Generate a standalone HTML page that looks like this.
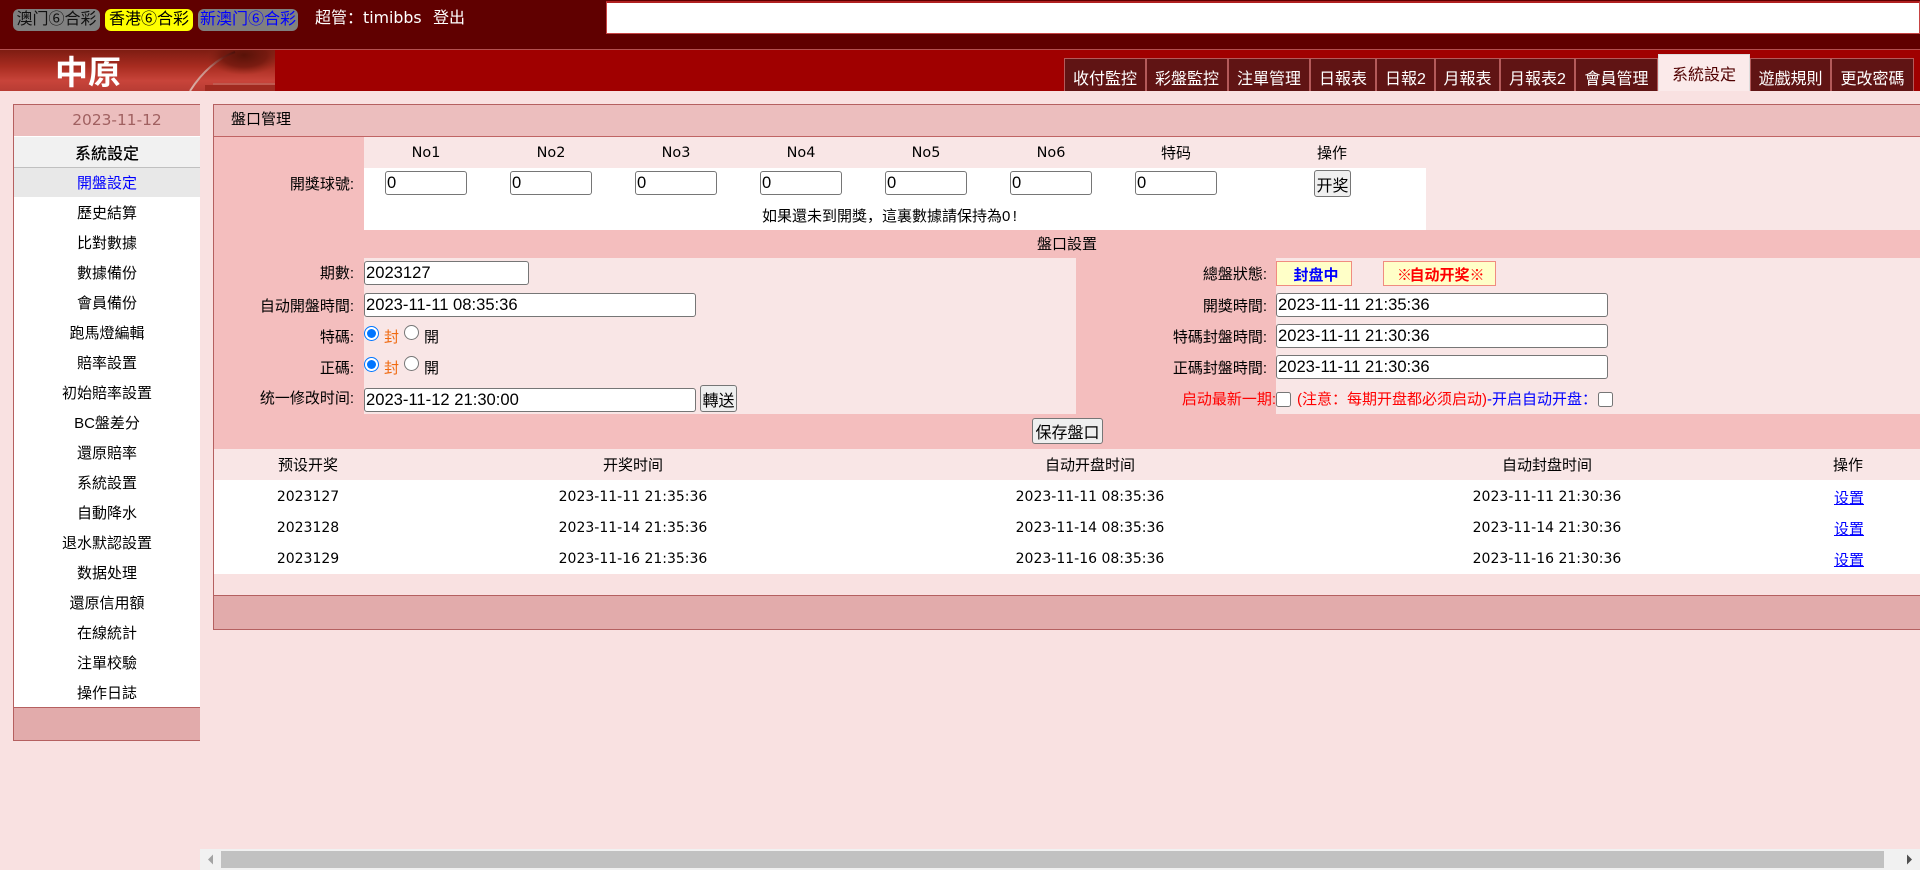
<!DOCTYPE html>
<html lang="zh"><head><meta charset="utf-8"><title>盤口管理</title>
<style>
html,body{margin:0;padding:0;width:1920px;height:870px;overflow:hidden;background:#f9e1e1}
body{position:relative;font-family:"Liberation Sans","Noto Sans CJK TC",sans-serif;font-size:15px;color:#000}
.b,.t,.c,.r,input,button,a{position:absolute}
.b{display:block}
.t,.c,.r{white-space:nowrap;height:20px;line-height:22px}
.c{width:300px;text-align:center}
.r{text-align:right}
.d{font-family:"DejaVu Sans","Noto Sans CJK TC",sans-serif;font-size:14px;line-height:20px}
.tab{position:absolute;top:58px;height:33px;box-sizing:border-box;background:#601414;border:1px solid #b55a5a;border-bottom:0;color:#fff;font-size:16px;line-height:42px;text-align:center;white-space:nowrap}
.pill{position:absolute;top:9px;height:22px;line-height:22px;border-radius:6px;font-size:16px;text-align:center;white-space:nowrap}
.m{position:absolute;left:14px;width:186px;height:30px;line-height:32px;text-align:center;font-size:15px;white-space:nowrap;color:#000}
input[type=text]{box-sizing:border-box;height:24px;margin:0;padding:1px 1px;border:1px solid #767676;border-radius:3px;background:#fff;color:#000;font:16.6px "Liberation Sans",sans-serif}
input[type=radio],input[type=checkbox]{margin:0;width:15px;height:15px}
button{box-sizing:border-box;margin:0;padding:0;border:1px solid #767676;border-radius:3px;background:#efefef;color:#000;font:16px "Liberation Sans","Noto Sans CJK TC",sans-serif;white-space:nowrap}
.st{position:absolute;top:261px;height:25px;box-sizing:border-box;background:#ffffc8;border:1px solid #f08c80;font-weight:bold;font-size:15px;line-height:28px;text-align:center;white-space:nowrap}
.x{display:inline-block;width:12.5px;text-align:center}
a{color:#00f;text-decoration:underline;text-underline-offset:1px}
</style></head><body>

<!-- top bar -->
<div class="b" style="left:0;top:0;width:1920px;height:49px;background:#600000"></div>
<div class="b" style="left:0;top:49px;width:1920px;height:1px;background:#b45050"></div>
<div class="pill" style="left:13px;width:87px;background:#808080;color:#111">澳门⑥合彩</div>
<div class="pill" style="left:105px;width:88px;background:#ff0;color:#000">香港⑥合彩</div>
<div class="pill" style="left:198px;width:100px;background:#808080;color:#00f">新澳门⑥合彩</div>
<div class="t" style="left:315px;top:7px;color:#fff;font-size:16px;font-family:'DejaVu Sans','Noto Sans CJK TC',sans-serif"><span style="font-size:16px">超管：</span><span style="font-size:15.8px">timibbs</span></div>
<div class="t" style="left:433px;top:8px;color:#fff;font-size:16px">登出</div>
<div class="b" style="left:606px;top:1px;width:1314px;height:33px;box-sizing:border-box;background:#fff;border:1px solid #c84444;border-top:2px solid #b02020"></div>

<!-- header -->
<div class="b" style="left:0;top:50px;width:1920px;height:41px;background:#a00000"></div>
<svg class="b" style="left:0;top:50px" width="275" height="41" viewBox="0 0 275 41">
<defs>
<linearGradient id="g" x1="0" y1="0" x2="0" y2="1"><stop offset="0" stop-color="#7e1c12"/><stop offset=".4" stop-color="#a82c20"/><stop offset=".75" stop-color="#c8443a"/><stop offset="1" stop-color="#b83c34"/></linearGradient>
<radialGradient id="h"><stop offset="0" stop-color="#581208"/><stop offset=".6" stop-color="#70180e" stop-opacity=".8"/><stop offset="1" stop-color="#8a2818" stop-opacity="0"/></radialGradient>
<linearGradient id="s" x1="0" y1="1" x2="1" y2="0"><stop offset="0" stop-color="#dcb4ac"/><stop offset=".45" stop-color="#c89088"/><stop offset=".8" stop-color="#6a2018"/><stop offset="1" stop-color="#4e100a"/></linearGradient>
</defs>
<rect width="275" height="41" fill="url(#g)"/>
<ellipse cx="244" cy="5" rx="38" ry="20" fill="url(#h)"/>
<path d="M190 41C202 22 218 8 235 2" fill="none" stroke="url(#s)" stroke-width="2"/>
<rect x="213" y="33" width="62" height="2" fill="#c05a50"/>
<rect x="205" y="35" width="70" height="6" fill="#a02a20"/>
</svg>
<div class="t" style="left:55px;top:53px;height:40px;line-height:40px;color:#fff;font-size:33px;font-weight:bold">中原</div>

<div class="tab" style="left:1064px;width:82px">收付監控</div>
<div class="tab" style="left:1146px;width:82px">彩盤監控</div>
<div class="tab" style="left:1228px;width:82px">注單管理</div>
<div class="tab" style="left:1310px;width:66px">日報表</div>
<div class="tab" style="left:1376px;width:59px">日報2</div>
<div class="tab" style="left:1435px;width:65px">月報表</div>
<div class="tab" style="left:1500px;width:75px">月報表2</div>
<div class="tab" style="left:1575px;width:83px">會員管理</div>
<div class="tab" style="left:1658px;top:54px;height:37px;width:92px;background:#fbeaea;color:#500000;border-color:#ddd;line-height:42px">系統設定</div>
<div class="tab" style="left:1750px;width:81px">遊戲規則</div>
<div class="tab" style="left:1831px;width:83px">更改密碼</div>

<!-- sidebar -->
<div class="b" style="left:13px;top:104px;width:187px;height:637px;box-sizing:border-box;background:#fff;border:1px solid #b56060;border-right:0"></div>
<div class="b" style="left:14px;top:105px;width:186px;height:31px;background:#ecbebe"></div>
<div class="m d" style="left:24px;top:105px;height:31px;line-height:31px;font-size:15.4px;color:#a06060">2023-11-12</div>
<div class="b" style="left:14px;top:137px;width:186px;height:30px;background:#f1f1f1;border-bottom:1px solid #c0c0c0"></div>
<div class="m" style="top:138px;font-size:16px;font-weight:500;line-height:33px">系統設定</div>
<div class="b" style="left:14px;top:168px;width:186px;height:29px;background:#e8e8e8"></div>
<div class="m" style="top:168px;color:#00f">開盤設定</div>
<div class="m" style="top:198px">歷史結算</div>
<div class="m" style="top:228px">比對數據</div>
<div class="m" style="top:258px">數據備份</div>
<div class="m" style="top:288px">會員備份</div>
<div class="m" style="top:318px">跑馬燈編輯</div>
<div class="m" style="top:348px">賠率設置</div>
<div class="m" style="top:378px">初始賠率設置</div>
<div class="m" style="top:408px">BC盤差分</div>
<div class="m" style="top:438px">還原賠率</div>
<div class="m" style="top:468px">系統設置</div>
<div class="m" style="top:498px">自動降水</div>
<div class="m" style="top:528px">退水默認設置</div>
<div class="m" style="top:558px">数据处理</div>
<div class="m" style="top:588px">還原信用額</div>
<div class="m" style="top:618px">在線統計</div>
<div class="m" style="top:648px">注單校驗</div>
<div class="m" style="top:678px">操作日誌</div>
<div class="b" style="left:14px;top:707px;width:186px;height:33px;background:#e2abab;border-top:1px solid #b56060;box-sizing:border-box"></div>

<!-- main panel -->
<div class="b" style="left:213px;top:104px;width:1707px;height:526px;box-sizing:border-box;border:1px solid #b56060;border-right:0;background:#f9e1e1"></div>
<div class="b" style="left:214px;top:105px;width:1706px;height:31px;background:#ecbebe"></div>
<div class="b" style="left:214px;top:136px;width:1706px;height:1px;background:#c06464"></div>
<div class="t" style="left:231px;top:110px;line-height:20px">盤口管理</div>

<!-- pink base -->
<div class="b" style="left:214px;top:137px;width:1706px;height:312px;background:#f4bebe"></div>
<div class="b" style="left:364px;top:137px;width:1556px;height:93px;background:#f9e6e6"></div>
<div class="b" style="left:364px;top:168px;width:1062px;height:62px;background:#fff"></div>
<div class="b" style="left:364px;top:258px;width:712px;height:156px;background:#f9e6e6"></div>
<div class="b" style="left:1276px;top:258px;width:644px;height:156px;background:#f9e6e6"></div>

<div class="c d" style="left:276px;top:143px;font-size:14.4px">No1</div>
<div class="c d" style="left:401px;top:143px;font-size:14.4px">No2</div>
<div class="c d" style="left:526px;top:143px;font-size:14.4px">No3</div>
<div class="c d" style="left:651px;top:143px;font-size:14.4px">No4</div>
<div class="c d" style="left:776px;top:143px;font-size:14.4px">No5</div>
<div class="c d" style="left:901px;top:143px;font-size:14.4px">No6</div>
<div class="c" style="left:1026px;top:143px">特码</div>
<div class="c" style="left:1182px;top:143px">操作</div>

<div class="r" style="left:214px;width:140px;top:174px">開獎球號:</div>
<input type="text" value="0" style="left:385px;top:171px;width:82px">
<input type="text" value="0" style="left:510px;top:171px;width:82px">
<input type="text" value="0" style="left:635px;top:171px;width:82px">
<input type="text" value="0" style="left:760px;top:171px;width:82px">
<input type="text" value="0" style="left:885px;top:171px;width:82px">
<input type="text" value="0" style="left:1010px;top:171px;width:82px">
<input type="text" value="0" style="left:1135px;top:171px;width:82px">
<button style="left:1314px;top:170px;width:37px;height:27px">开奖</button>
<div class="t" style="left:762px;top:206px">如果還未到開獎，這裏數據請保持為<span style="letter-spacing:2.4px">0!</span></div>

<div class="c" style="left:917px;top:234px">盤口設置</div>

<!-- left form -->
<div class="r" style="left:214px;width:140px;top:263px">期數:</div>
<input type="text" value="2023127" style="left:364px;top:261px;width:165px">
<div class="r" style="left:214px;width:140px;top:296px">自动開盤時間:</div>
<input type="text" value="2023-11-11 08:35:36" style="left:364px;top:293px;width:332px">
<div class="r" style="left:214px;width:140px;top:327px">特碼:</div>
<input type="radio" name="a" checked style="left:364px;top:326px">
<div class="t" style="left:384px;top:327px;color:#f06a10">封</div>
<input type="radio" name="a" style="left:404px;top:325px">
<div class="t" style="left:424px;top:327px">開</div>
<div class="r" style="left:214px;width:140px;top:358px">正碼:</div>
<input type="radio" name="b" checked style="left:364px;top:357px">
<div class="t" style="left:384px;top:358px;color:#f06a10">封</div>
<input type="radio" name="b" style="left:404px;top:356px">
<div class="t" style="left:424px;top:358px">開</div>
<div class="r" style="left:214px;width:140px;top:388px">统一修改时间:</div>
<input type="text" value="2023-11-12 21:30:00" style="left:364px;top:388px;width:332px">
<button style="left:700px;top:385px;width:37px;height:27px">轉送</button>

<!-- right form -->
<div class="r" style="left:1076px;width:191px;top:264px">總盤狀態:</div>
<div class="st" style="left:1276px;width:76px;color:#00f;padding-left:4px">封盘中</div>
<div class="st" style="left:1383px;width:113px;color:#f00"><span class="x">※</span>自动开奖<span class="x">※</span></div>
<div class="r" style="left:1076px;width:191px;top:296px">開獎時間:</div>
<input type="text" value="2023-11-11 21:35:36" style="left:1276px;top:293px;width:332px">
<div class="r" style="left:1076px;width:191px;top:327px">特碼封盤時間:</div>
<input type="text" value="2023-11-11 21:30:36" style="left:1276px;top:324px;width:332px">
<div class="r" style="left:1076px;width:191px;top:358px">正碼封盤時間:</div>
<input type="text" value="2023-11-11 21:30:36" style="left:1276px;top:355px;width:332px">
<div class="r" style="left:1076px;width:200px;top:389px;color:#f00">启动最新一期:</div>
<input type="checkbox" style="left:1276px;top:392px">
<div class="t" style="left:1297px;top:389px;color:#f00">(注意：每期开盘都必须启动)<span style="color:#00f">-开启自动开盘：</span></div>
<input type="checkbox" style="left:1598px;top:392px">

<button style="left:1032px;top:418px;width:71px;height:26px">保存盤口</button>

<!-- table -->
<div class="b" style="left:214px;top:449px;width:1706px;height:31px;background:#f9e6e6"></div>
<div class="b" style="left:214px;top:480px;width:1706px;height:94px;background:#fff"></div>
<div class="c" style="left:158px;top:455px">预设开奖</div>
<div class="c" style="left:483px;top:455px">开奖时间</div>
<div class="c" style="left:940px;top:455px">自动开盘时间</div>
<div class="c" style="left:1397px;top:455px">自动封盘时间</div>
<div class="c" style="left:1698px;top:455px">操作</div>

<div class="c d" style="left:158px;top:487px">2023127</div>
<div class="c d" style="left:483px;top:487px">2023-11-11 21:35:36</div>
<div class="c d" style="left:940px;top:487px">2023-11-11 08:35:36</div>
<div class="c d" style="left:1397px;top:487px">2023-11-11 21:30:36</div>
<a class="c" href="#" style="left:1699px;top:488px"><span>设置</span></a>

<div class="c d" style="left:158px;top:518px">2023128</div>
<div class="c d" style="left:483px;top:518px">2023-11-14 21:35:36</div>
<div class="c d" style="left:940px;top:518px">2023-11-14 08:35:36</div>
<div class="c d" style="left:1397px;top:518px">2023-11-14 21:30:36</div>
<a class="c" href="#" style="left:1699px;top:519px"><span>设置</span></a>

<div class="c d" style="left:158px;top:549px">2023129</div>
<div class="c d" style="left:483px;top:549px">2023-11-16 21:35:36</div>
<div class="c d" style="left:940px;top:549px">2023-11-16 08:35:36</div>
<div class="c d" style="left:1397px;top:549px">2023-11-16 21:30:36</div>
<a class="c" href="#" style="left:1699px;top:550px"><span>设置</span></a>

<div class="b" style="left:214px;top:595px;width:1706px;height:34px;box-sizing:border-box;background:#e2abab;border-top:1px solid #b56060"></div>

<!-- scrollbar -->
<div class="b" style="left:200px;top:849px;width:1720px;height:21px;background:#f1f1f1"></div>
<div class="b" style="left:221px;top:851px;width:1663px;height:17px;background:#c1c1c1"></div>
<svg class="b" style="left:200px;top:849px" width="21" height="21"><path d="M8 10.5L13 5.5V15.5Z" fill="#a3a3a3"/></svg>
<svg class="b" style="left:1899px;top:849px" width="21" height="21"><path d="M8 5.5L13 10.5L8 15.5Z" fill="#505050"/></svg>
</body></html>
